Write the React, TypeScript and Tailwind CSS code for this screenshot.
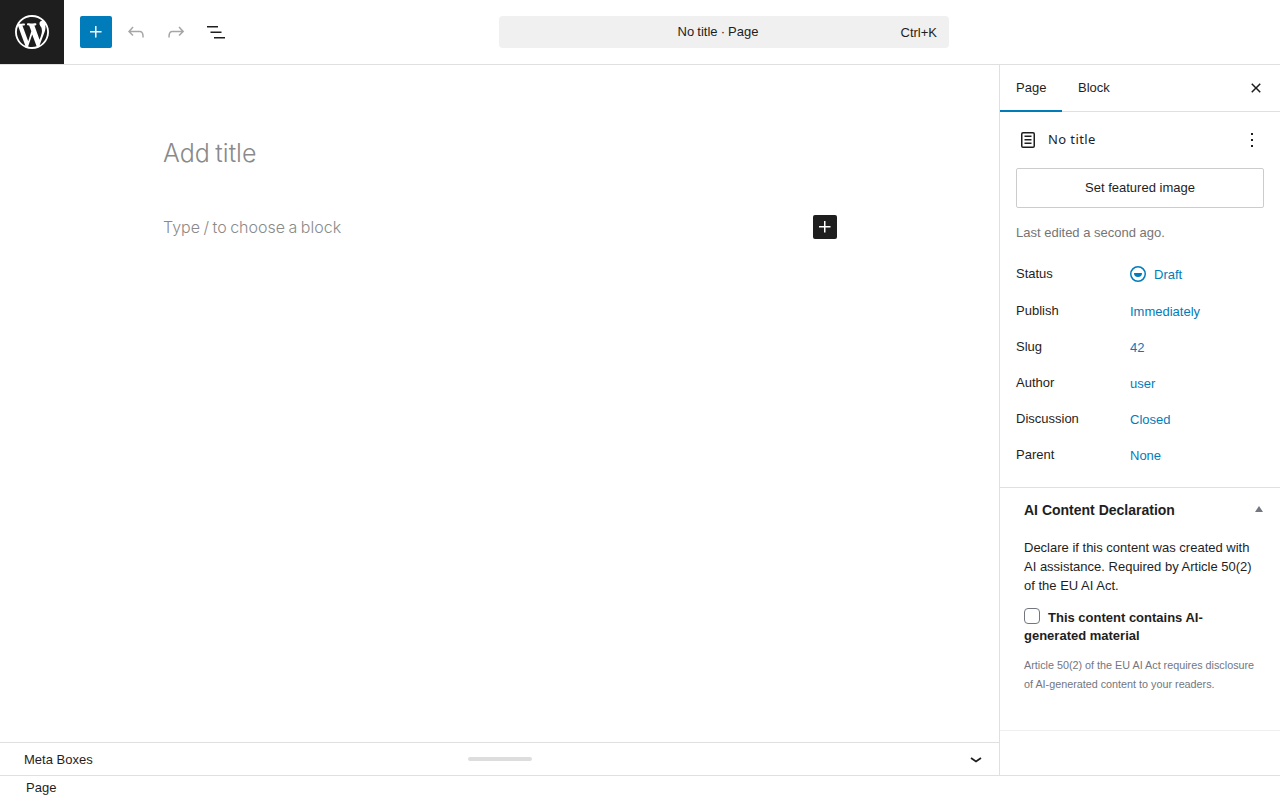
const Ui = "font-['Liberation_Sans',Arial,sans-serif]";

function Icon({ d, size = 24, className = "", fill = "currentColor", view = "0 0 24 24" }: { d: string; size?: number; className?: string; fill?: string; view?: string }) {
  return (
    <svg width={size} height={size} viewBox={view} className={className} fill={fill} fillRule="evenodd" clipRule="evenodd">
      <path d={d} />
    </svg>
  );
}

const WP = "M20 10c0-5.51-4.49-10-10-10C4.48 0 0 4.49 0 10c0 5.52 4.48 10 10 10 5.51 0 10-4.48 10-10zM7.78 15.37L4.37 6.22c.55-.02 1.17-.08 1.17-.08.5-.06.44-1.13-.06-1.11 0 0-1.45.11-2.37.11-.18 0-.37 0-.58-.01C4.12 2.69 6.87 1.11 10 1.11c2.33 0 4.45.87 6.05 2.34-.68-.11-1.65.39-1.65 1.58 0 .74.45 1.36.9 2.1.35.61.55 1.36.55 2.46 0 1.49-1.4 5-1.4 5l-3.03-8.37c.54-.02.82-.17.82-.17.5-.05.44-1.25-.06-1.22 0 0-1.44.12-2.38.12-.87 0-2.33-.12-2.33-.12-.5-.03-.56 1.2-.06 1.22l.92.08 1.26 3.41zM17.41 10c.24-.64.74-1.87.43-4.25.7 1.29 1.05 2.71 1.05 4.25 0 3.29-1.73 6.24-4.4 7.78.97-2.59 1.94-5.2 2.92-7.78zM6.1 18.09C3.12 16.65 1.11 13.53 1.11 10c0-1.3.23-2.48.72-3.59C3.25 10.3 4.67 14.2 6.1 18.09zm4.03-6.63l2.58 6.98c-.86.29-1.76.45-2.71.45-.79 0-1.57-.11-2.29-.33.81-2.38 1.62-4.74 2.42-7.1z";
const PLUS = "M11 12.5V17.5H12.5V12.5H17.5V11H12.5V6H11V11H6V12.5H11Z";
const UNDO = "M18.3 11.7c-.6-.6-1.4-.9-2.3-.9H6.7l2.9-3.3-1.1-1-4.5 5L8.5 16l1-1-2.7-2.7H16c.5 0 .9.2 1.3.5 1 1 1 3.4 1 4.5v.3h1.5v-.2c0-1.5 0-4.3-1.5-5.7z";
const REDO = "M15.6 6.5l-1.1 1 2.9 3.3H8c-.9 0-1.7.3-2.3.9-1.4 1.5-1.4 4.2-1.4 5.6v.2h1.5v-.3c0-1.1 0-3.5 1-4.5.3-.3.7-.5 1.3-.5h9.2L14.5 15l1.1 1.1 4.6-4.6-4.6-5z";
const LIST = "M3 6h11v1.5H3V6zm3.5 5.5h11V13h-11v-1.5zM21 17H10v1.5h11V17z";
const CLOSE = "M12 13.06l3.712 3.713 1.061-1.06L13.061 12l3.712-3.712-1.06-1.06L12 10.938 8.288 7.227l-1.061 1.06L10.939 12l-3.712 3.712 1.06 1.061L12 13.061z";
const PAGE = "M15.5 7.5h-7V9h7V7.5Zm-7 3.5h7v1.5h-7V11Zm7 3.5h-7V16h7v-1.5ZM17 4H7a2 2 0 0 0-2 2v12a2 2 0 0 0 2 2h10a2 2 0 0 0 2-2V6a2 2 0 0 0-2-2ZM7 5.5h10a.5.5 0 0 1 .5.5v12a.5.5 0 0 1-.5.5H7a.5.5 0 0 1-.5-.5V6a.5.5 0 0 1 .5-.5Z";
const MORE = "M13 19h-2v-2h2v2zm0-6h-2v-2h2v2zm0-6h-2V5h2v2z";

const rows: [string, string][] = [
  ["Publish", "Immediately"],
  ["Slug", "42"],
  ["Author", "user"],
  ["Discussion", "Closed"],
  ["Parent", "None"],
];

export default function App() {
  return (
    <div className={`${Ui} w-[1280px] h-[800px] overflow-hidden bg-white flex flex-col text-[13px] text-[#1e1e1e]`}>
      <header className="h-[65px] shrink-0 border-b border-[#e0e0e0] flex items-stretch">
        <div className="w-16 h-16 bg-[#1e1e1e] flex items-center justify-center text-white">
          <Icon d={WP} size={34} view="0 0 20 20" />
        </div>
        <div className="w-[435px] pl-4 flex items-center gap-2">
          <div className="w-8 h-8 rounded-[2px] bg-[#007cba] text-white flex items-center justify-center">
            <Icon d={PLUS} />
          </div>
          <div className="w-8 h-8 flex items-center justify-center text-[#a6a6a6]"><Icon d={UNDO} /></div>
          <div className="w-8 h-8 flex items-center justify-center text-[#a6a6a6]"><Icon d={REDO} /></div>
          <div className="w-8 h-8 flex items-center justify-center text-[#1e1e1e]"><Icon d={LIST} /></div>
        </div>
        <div className="flex items-center">
          <div className="w-[450px] h-8 rounded-sm bg-[#f0f0f0] relative flex items-center justify-center">
            <span className="pr-[12px] [word-spacing:-0.5px]">No title · Page</span>
            <span className="absolute right-3 top-[7px]">Ctrl+K</span>
          </div>
        </div>
      </header>

      <div className="flex-1 min-h-0 flex">
        <main className="w-[1000px] shrink-0 border-r border-[#e0e0e0] flex flex-col">
          <div className="flex-1 min-h-0 pl-[163px] pr-[162px]">
            <div className="pt-[69px] font-['Inter',sans-serif] font-light text-[25px] leading-[38px] text-[#8a8a8a] [word-spacing:-1.5px]">Add title</div>
            <div className="mt-[43px] flex items-center justify-between h-6 font-['Inter',sans-serif] font-light text-[16px] text-[#8a8a8a] [word-spacing:-1px]">
              <span>Type / to choose a block</span>
              <span className="w-6 h-6 rounded-[2px] bg-[#1e1e1e] text-white flex items-center justify-center"><Icon d={PLUS} /></span>
            </div>
          </div>
          <div className="h-[33px] shrink-0 border-t border-[#e0e0e0] flex items-center justify-between pl-6 pr-[17px] relative">
            <span className="mt-[2px]">Meta Boxes</span>
            <span className="absolute left-[468px] top-[14px] w-16 h-1 rounded-sm bg-[#dddddd]" />
            <svg width="12" height="8" viewBox="0 0 12 8" fill="none" stroke="#1e1e1e" strokeWidth="1.75"><path d="M1 3l5 3.5L11 3" /></svg>
          </div>
        </main>

        <aside className="w-[280px] shrink-0 flex flex-col">
          <div className="h-[47px] shrink-0 border-b border-[#e0e0e0] flex items-stretch relative">
            <div className="w-[62px] pl-4 flex items-center border-b-2 border-[#007cba] -mb-px">Page</div>
            <div className="pl-4 flex items-center">Block</div>
            <span className="absolute right-3 top-[11px]"><Icon d={CLOSE} /></span>
          </div>
          <div className="px-4 pt-4 h-[376px] shrink-0 border-b border-[#e0e0e0]">
            <div className="flex items-center h-6 relative">
              <Icon d={PAGE} />
              <span className="ml-2 font-['Noto_Sans',sans-serif] text-[13px] tracking-[0.4px]">No title</span>
              <span className="absolute right-0 top-0"><Icon d={MORE} /></span>
            </div>
            <div className="mt-4 h-10 border border-[#cccccc] rounded-[2px] flex items-center justify-center">Set featured image</div>
            <div className="mt-[15px] text-[#757575]">Last edited a second ago.</div>
            <div className="mt-[20px] flex items-center h-6">
              <span className="w-[114px] -mt-[1px]">Status</span>
              <svg width="16" height="16" viewBox="0 0 16 16" className="mr-2 -mt-[1px]"><circle cx="8" cy="8" r="7.25" fill="none" stroke="#007cba" strokeWidth="1.5" /><path d="M4 7h8a4 4 0 0 1-8 0Z" fill="#007cba" /></svg>
              <span className="text-[#007cba]">Draft</span>
            </div>
            <div className="mt-[15px] flex flex-col gap-[12px]">
              {rows.map(([k, v]) => (
                <div key={k} className="flex h-[24px] leading-[20px]">
                  <span className="w-[114px] -mt-[1px]">{k}</span>
                  <span className="text-[#007cba]">{v}</span>
                </div>
              ))}
            </div>
          </div>
          <div className="h-[243px] shrink-0 border-b border-[#f0f0f0] px-6 relative">
            <div className="pt-[13px] text-[14px] font-bold leading-[18px]">AI Content Declaration</div>
            <svg width="8" height="6" viewBox="0 0 8 6" className="absolute right-[17px] top-[18px]"><path d="M4 0l4 6H0Z" fill="#72777f" /></svg>
            <p className="mt-[19px] leading-[19px]">Declare if this content was created with AI assistance. Required by Article 50(2) of the EU AI Act.</p>
            <div className="mt-[13px] font-bold leading-[18px]">
              <span className="inline-block w-4 h-4 border border-[#72777f] rounded-[4px] align-[-2px] mr-2" />
              This content contains AI-generated material
            </div>
            <p className="mt-[11px] text-[10.79px] leading-[19px] text-[#72777f]">Article 50(2) of the EU AI Act requires disclosure of AI-generated content to your readers.</p>
          </div>
          <div className="flex-1" />
        </aside>
      </div>

      <footer className="h-[25px] shrink-0 border-t border-[#e0e0e0] pl-[26px] leading-[23px]">Page</footer>
    </div>
  );
}
